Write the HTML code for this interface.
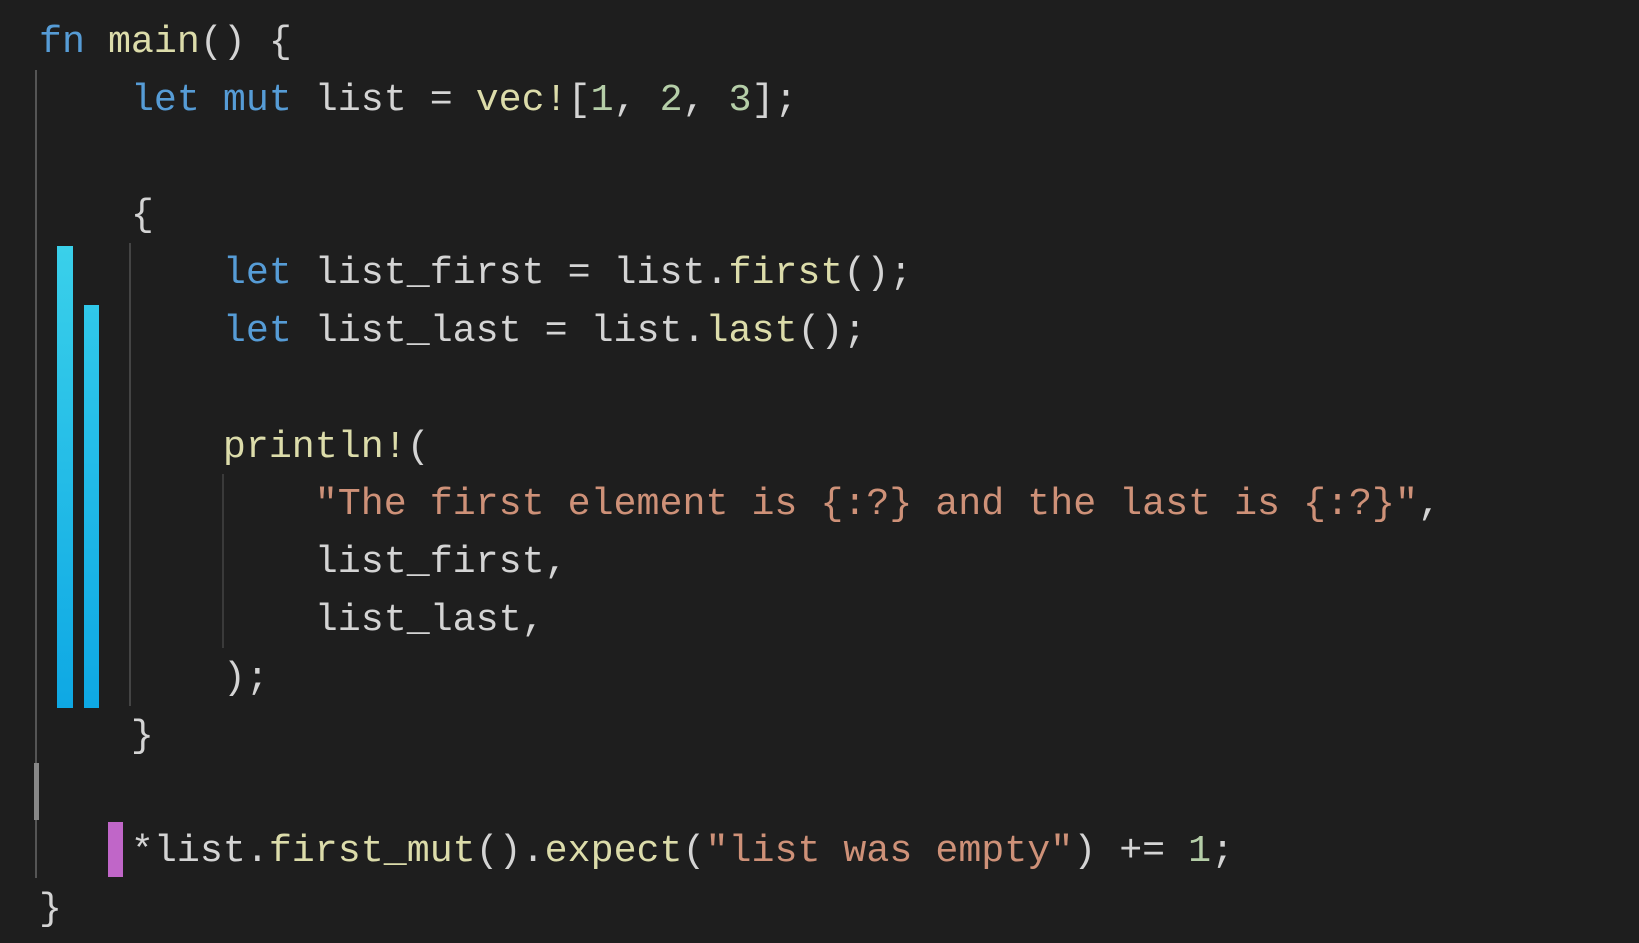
<!DOCTYPE html>
<html><head><style>
html,body{margin:0;padding:0;background:#1e1e1e;width:1639px;height:943px;overflow:hidden}
pre{position:absolute;left:39px;top:14px;margin:0;font-family:"Liberation Mono",monospace;font-size:38.3px;line-height:57.8px;color:#d4d4d4;letter-spacing:0}
.k{color:#569cd6}.f{color:#dcdcaa}.s{color:#ce9178}.n{color:#b5cea8}
.b{position:absolute}
</style></head><body>
<div class="b" style="left:35px;top:70px;width:2px;height:808px;background:#555"></div>
<div class="b" style="left:34px;top:763px;width:5px;height:57px;background:#888"></div>
<div class="b" style="left:129px;top:243px;width:2px;height:463px;background:#444"></div>
<div class="b" style="left:222px;top:474px;width:2px;height:174px;background:#3a3a3a"></div>
<div class="b" style="left:57px;top:246px;width:16px;height:462px;background:linear-gradient(#3ad0ea,#0ea8e4)"></div>
<div class="b" style="left:84px;top:305px;width:15px;height:403px;background:linear-gradient(#30c8ea,#0ea8e4)"></div>
<div class="b" style="left:108px;top:822px;width:15px;height:55px;background:#c066c8"></div>
<pre><span class="k">fn</span> <span class="f">main</span>() {
    <span class="k">let</span> <span class="k">mut</span> list = <span class="f">vec!</span>[<span class="n">1</span>, <span class="n">2</span>, <span class="n">3</span>];

    {
        <span class="k">let</span> list_first = list.<span class="f">first</span>();
        <span class="k">let</span> list_last = list.<span class="f">last</span>();

        <span class="f">println!</span>(
            <span class="s">"The first element is {:?} and the last is {:?}"</span>,
            list_first,
            list_last,
        );
    }

    *list.<span class="f">first_mut</span>().<span class="f">expect</span>(<span class="s">"list was empty"</span>) += <span class="n">1</span>;
}</pre>
</body></html>
